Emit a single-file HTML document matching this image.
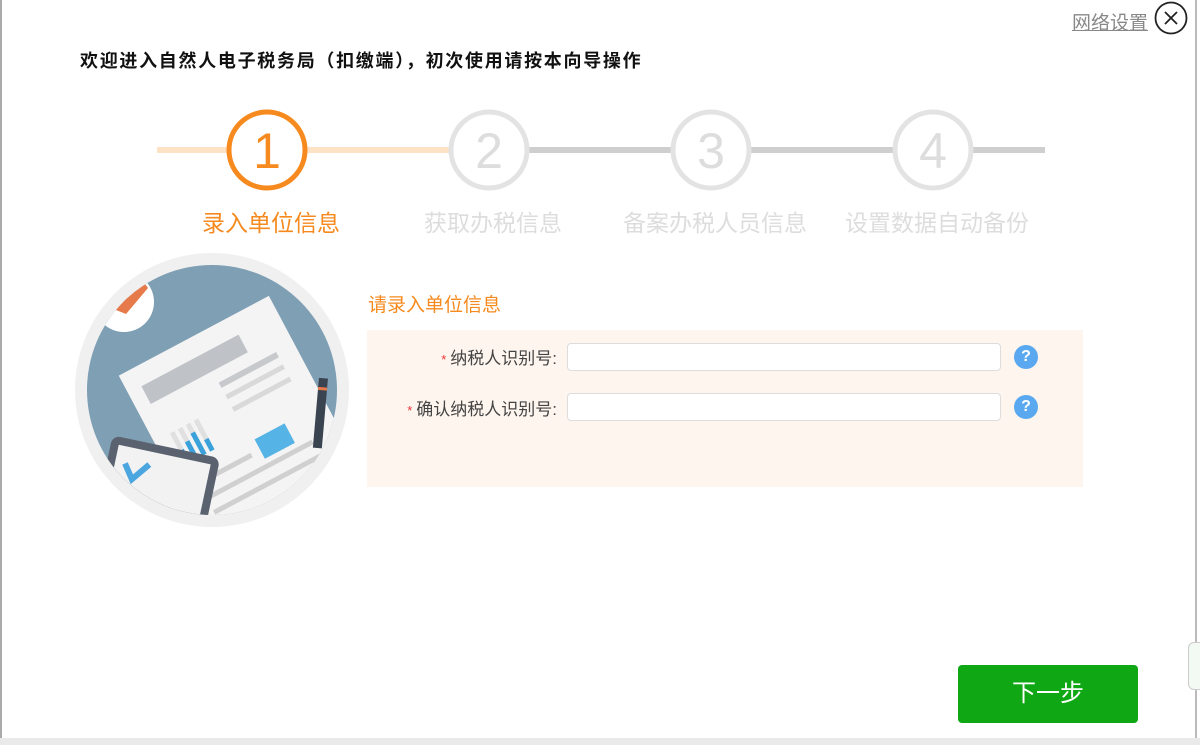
<!DOCTYPE html>
<html><head><meta charset="utf-8"><style>
body{margin:0;width:1200px;height:745px;overflow:hidden;background:#fff;font-family:"Liberation Sans","Noto Sans CJK SC",sans-serif;position:relative}
.a{position:absolute}
.lbl{font-size:23px;color:#ddd;width:222px;text-align:center;top:204px}
.fl{font-size:17px;color:#444;text-align:right;width:200px}
.fl b{color:#e33;font-weight:normal;font-size:13px;margin-right:4px}
.in{border:1px solid #ddd;border-radius:4px;background:#fff;width:432px;height:26px}
.q{width:24px;height:24px;border-radius:50%;background:#5aa8ef;color:#fff;font-weight:bold;font-size:16px;text-align:center;line-height:24px}
</style></head><body>
<div class="a" style="left:0;top:0;width:2px;height:745px;background:#aaa"></div>
<div class="a" style="right:3px;top:0;width:2px;height:745px;background:#bbb"></div>
<div class="a" style="left:0;top:738px;width:1200px;height:7px;background:#eaeaea"></div>
<div class="a" style="left:1072px;top:8px;font-size:19px;color:#888;text-decoration:underline">网络设置</div>
<svg class="a" style="left:1154px;top:1px" width="36" height="36"><circle cx="17" cy="17" r="15.5" fill="none" stroke="#222" stroke-width="1.8"/><path d="M11 11L23 23M23 11L11 23" stroke="#222" stroke-width="1.8"/></svg>
<div class="a" style="left:80px;top:47px;font-size:18px;letter-spacing:1.7px;font-weight:bold;color:#111">欢迎进入自然人电子税务局（扣缴端），初次使用请按本向导操作</div>
<svg class="a" style="left:0;top:100px" width="1100" height="100">
<line x1="157" y1="50" x2="489" y2="50" stroke="#fde2c6" stroke-width="6"/>
<line x1="489" y1="50" x2="1045" y2="50" stroke="#cfcfcf" stroke-width="6"/>
<circle cx="267" cy="50" r="38" fill="#fff" stroke="#f68a1e" stroke-width="5"/>
<circle cx="489" cy="50" r="38" fill="#fff" stroke="#e3e3e3" stroke-width="5"/>
<circle cx="711" cy="50" r="38" fill="#fff" stroke="#e3e3e3" stroke-width="5"/>
<circle cx="933" cy="50" r="38" fill="#fff" stroke="#e3e3e3" stroke-width="5"/>
<g font-family="Liberation Sans" font-size="50" text-anchor="middle"><text x="267" y="68" fill="#f68a1e">1</text><text x="489" y="68" fill="#ddd">2</text><text x="711" y="68" fill="#ddd">3</text><text x="933" y="68" fill="#ddd">4</text></g>
</svg>
<div class="a lbl" style="left:160px;color:#f68a1e">录入单位信息</div>
<div class="a lbl" style="left:382px">获取办税信息</div>
<div class="a lbl" style="left:604px">备案办税人员信息</div>
<div class="a lbl" style="left:826px">设置数据自动备份</div>
<svg class="a" style="left:74px;top:252px" width="276" height="276">
<defs><clipPath id="c"><circle cx="138" cy="138" r="125"/></clipPath></defs>
<circle cx="138" cy="138" r="137" fill="#f0f0f0"/>
<circle cx="138" cy="138" r="125" fill="#7f9fb4"/>
<g clip-path="url(#c)">
<circle cx="50" cy="50" r="30" fill="#fff"/><path d="M22 50A28 28 0 0 1 74 36L52 62Z" fill="#e77a4a"/>
<g transform="rotate(-28 160 170)"><rect x="80" y="75" width="170" height="220" fill="#f4f4f4"/><rect x="95" y="95" width="110" height="20" fill="#bfc3c8"/><rect x="165" y="128" width="65" height="6" fill="#c7c9cc"/><rect x="165" y="142" width="65" height="5" fill="#d9d9d9"/><rect x="165" y="156" width="65" height="5" fill="#d9d9d9"/><rect x="98" y="150" width="5" height="35" fill="#e0e0e0"/><rect x="98" y="170" width="5" height="15" fill="#3aa1db"/><rect x="107" y="150" width="5" height="35" fill="#e0e0e0"/><rect x="107" y="165" width="5" height="20" fill="#3aa1db"/><rect x="116" y="150" width="5" height="35" fill="#e0e0e0"/><rect x="116" y="160" width="5" height="25" fill="#3aa1db"/><rect x="125" y="150" width="5" height="35" fill="#e0e0e0"/><rect x="125" y="172" width="5" height="13" fill="#3aa1db"/><rect x="170" y="195" width="34" height="22" fill="#55b3e6"/><rect x="100" y="205" width="60" height="5" fill="#d0d0d0"/><rect x="100" y="222" width="120" height="5" fill="#d0d0d0"/><rect x="100" y="238" width="120" height="5" fill="#d0d0d0"/></g>
<rect x="242" y="126" width="9" height="70" fill="#3a4350" transform="rotate(5 245 160)"/><rect x="242" y="135" width="9" height="3" fill="#e77a4a" transform="rotate(5 245 160)"/>
<g transform="rotate(12 90 230)"><rect x="30" y="195" width="110" height="90" rx="8" fill="#5a6270"/><rect x="38" y="203" width="94" height="80" fill="#f2f2f2"/><path d="M48 220l10 14l14-18" fill="none" stroke="#4ba6e0" stroke-width="6"/></g>
</g></svg>
<div class="a" style="left:368px;top:290px;font-size:19px;color:#f68a1e">请录入单位信息</div>
<div class="a" style="left:367px;top:330px;width:716px;height:157px;background:#fef5ee"></div>
<div class="a fl" style="left:357px;top:344px"><b>*</b>纳税人识别号:</div>
<div class="a fl" style="left:357px;top:395px"><b>*</b>确认纳税人识别号:</div>
<div class="a in" style="left:567px;top:343px"></div>
<div class="a in" style="left:567px;top:393px"></div>
<div class="a q" style="left:1014px;top:345px">?</div>
<div class="a q" style="left:1014px;top:395px">?</div>
<div class="a" style="left:958px;top:665px;width:180px;height:58px;background:#10a714;border-radius:4px;color:#fff;font-size:24px;text-align:center;line-height:58px">下一步</div>
<div class="a" style="left:1188px;top:642px;width:12px;height:46px;border:1px solid #ccc;border-radius:6px 0 0 6px;background:#f3faf3"></div>
</body></html>
